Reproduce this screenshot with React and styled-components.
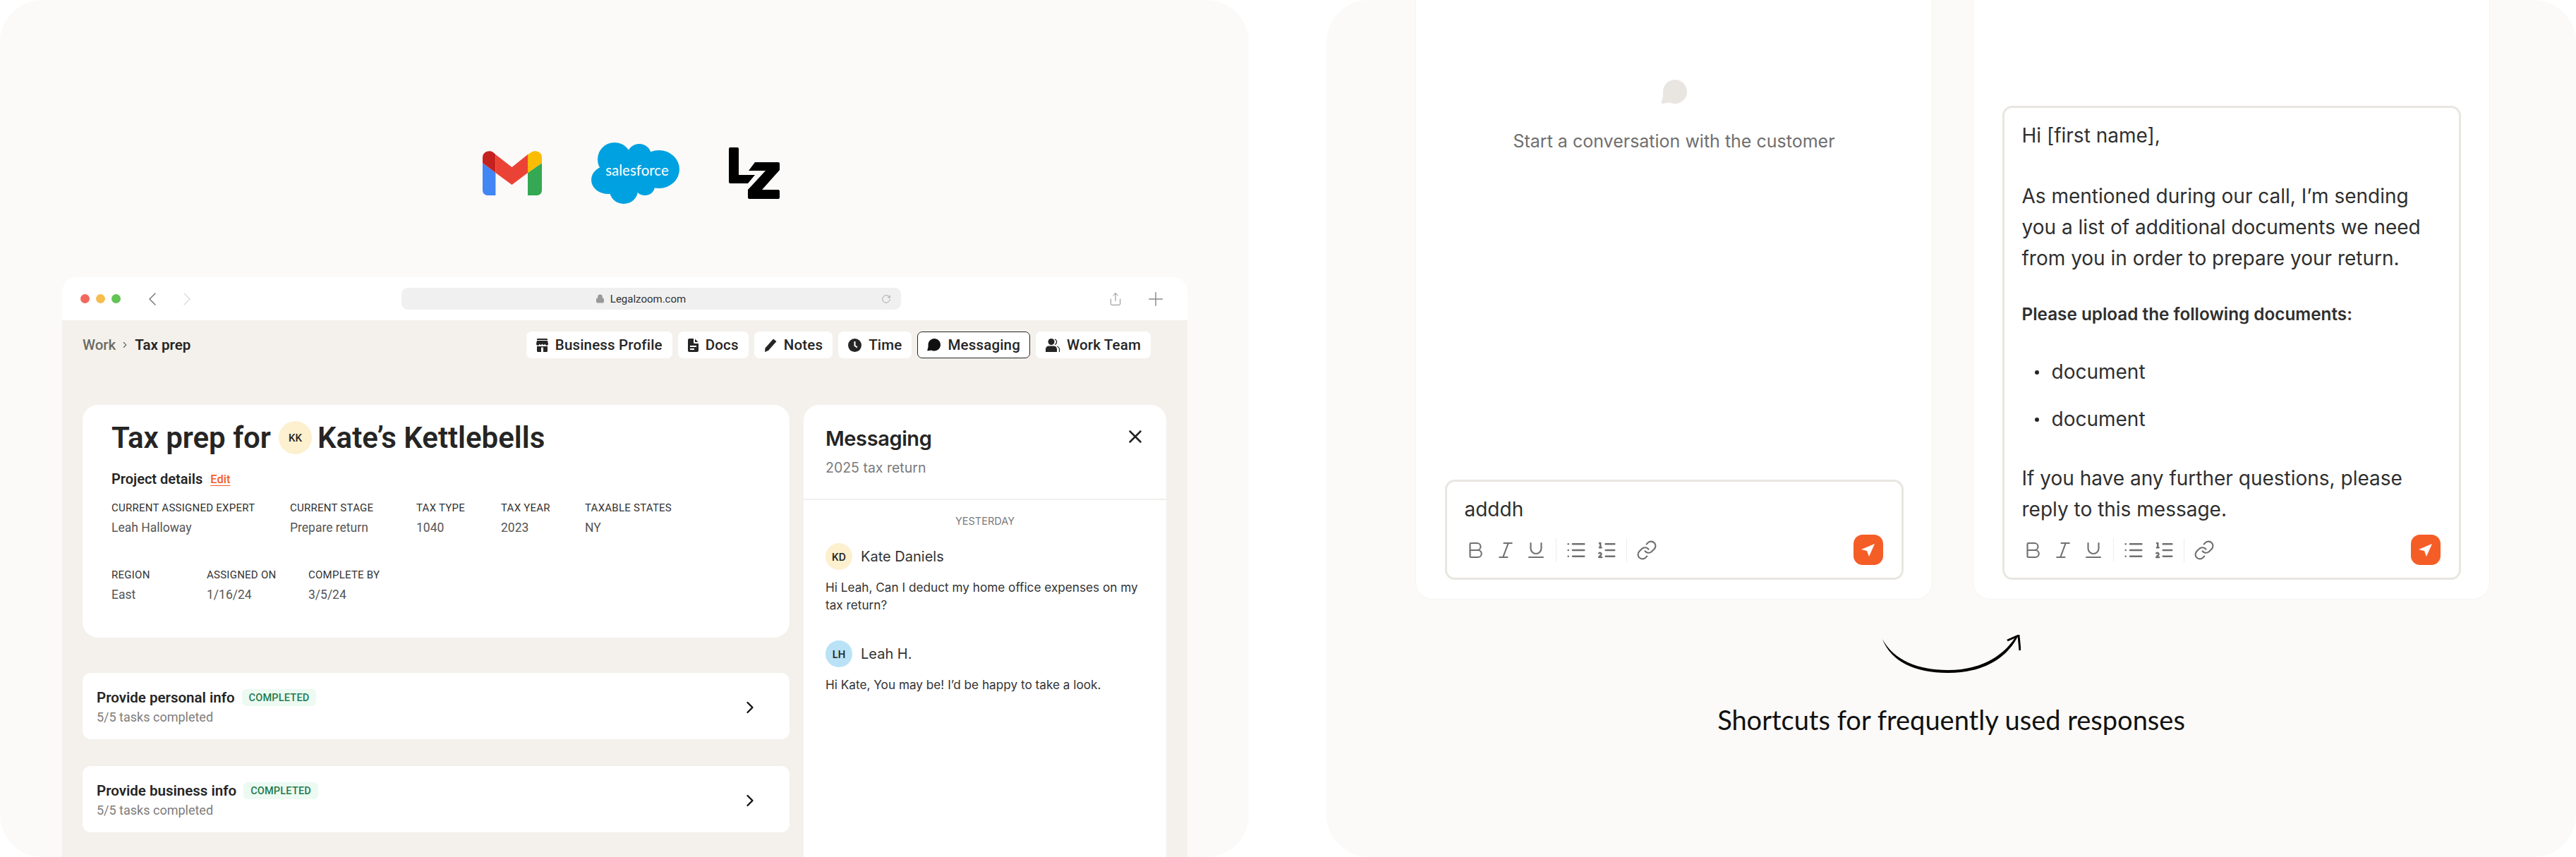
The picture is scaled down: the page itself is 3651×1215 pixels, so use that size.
import React from 'react'
import styled, { createGlobalStyle } from 'styled-components'
import { Bold, Italic, Underline, List, ListOrdered, Link, ChevronLeft, ChevronRight, X, RotateCw, Lock, Plus, Share } from 'lucide-react'

const plex = `Roboto, "Liberation Sans", sans-serif`
const work = `Inter, "Liberation Sans", sans-serif`

const Global = createGlobalStyle`
  html, body { margin: 0; padding: 0; background: #fff; }
  #root { width: 3651px; height: 1215px; overflow: hidden; }
  * { box-sizing: border-box; }
`

const Page = styled.div`
  display: flex;
  gap: 110px;
  width: 3651px;
  height: 1215px;
`

const Panel = styled.section`
  width: 1770px;
  height: 1215px;
  flex: none;
  background: #fbfaf8;
  border-radius: 60px;
  overflow: hidden;
  display: flex;
  flex-direction: column;
`

const LeftPanel = styled(Panel)`
  padding: 202px 87px 0 88px;
`

const RightPanel = styled(Panel)`
  width: 1771px;
  align-items: center;
`

const Logos = styled.div`
  display: flex;
  align-items: center;
  height: 87px;
  padding-left: 596px;
  gap: 70px;
  margin-bottom: 104px;
`

const Browser = styled.div`
  flex: 1;
  display: flex;
  flex-direction: column;
  border-radius: 20px 20px 0 0;
  overflow: hidden;
  background: #f4f1ec;
`

const BrowserBar = styled.div`
  height: 61px;
  flex: none;
  background: #fff;
  display: flex;
  align-items: center;
  padding-left: 26px;
`

const Dot = styled.span`
  width: 13px;
  height: 13px;
  border-radius: 50%;
  background: ${p => p.$color};
  margin-right: 9px;
`

const Nav = styled.div`
  display: flex;
  gap: 17px;
  margin-left: 20px;
  margin-right: 288px;
  color: ${p => p.$color};
  svg { display: block; }
`

const UrlBar = styled.div`
  width: 708px;
  height: 31px;
  border-radius: 9px;
  background: #f0f0f0;
  display: grid;
  grid-template-columns: 1fr auto 1fr;
  align-items: center;
  padding: 0 14px;
  font: 400 15px ${plex};
  color: #333;
`

const UrlText = styled.div`
  grid-column: 2;
  display: flex;
  align-items: center;
  gap: 8px;
  margin-right: 30px;
`

const Reload = styled.div`
  justify-self: end;
  display: flex;
  color: #999;
`

const BarAction = styled.div`
  display: flex;
  color: #8a8a8a;
  margin-left: ${p => p.$ml}px;
`

const Content = styled.div`
  flex: 1;
  min-height: 0;
  padding: 16px 30px 0 29px;
  display: flex;
  flex-direction: column;
`

const TopRow = styled.div`
  display: flex;
  align-items: center;
  justify-content: space-between;
  padding-right: 22px;
  margin-bottom: 66px;
`

const Crumbs = styled.div`
  display: flex;
  align-items: center;
  gap: 6px;
  font: 500 20.5px ${plex};
  color: #6b6b66;
  b { font-weight: 600; color: #252525; margin-left: 1px; }
`

const Tabs = styled.div`
  display: flex;
  gap: 8px;
`

const Tab = styled.div`
  height: 38px;
  padding: 0 13px;
  display: flex;
  align-items: center;
  gap: 10px;
  background: #fff;
  border-radius: 7px;
  border: 1px solid ${p => (p.$active ? '#252525' : '#fff')};
  font: 500 20.5px ${plex};
  letter-spacing: 0.18px;
  color: #252525;
  svg { flex: none; display: block; }
`

const Columns = styled.div`
  flex: 1;
  min-height: 0;
  display: flex;
  gap: 20px;
`

const Main = styled.div`
  width: 1002px;
  flex: none;
`

const DetailCard = styled.div`
  height: 330px;
  background: #fff;
  border-radius: 22px;
  padding: 23px 41px 0;
  margin-bottom: 50px;
`

const Title = styled.h1`
  margin: 0 0 23px;
  display: flex;
  align-items: center;
  height: 47px;
  font: 600 42px ${plex};
  color: #252525;
`

const Avatar = styled.span`
  flex: none;
  width: ${p => p.$size}px;
  height: ${p => p.$size}px;
  border-radius: 50%;
  background: ${p => p.$bg};
  display: flex;
  align-items: center;
  justify-content: center;
  font-family: ${p => (p.$work ? work : plex)};
  font-weight: ${p => (p.$work ? 600 : 500)};
  font-size: ${p => p.$fs}px;
  color: #252525;
`

const TitleAvatar = styled(Avatar)`
  margin: 0 8px 0 11px;
`

const DetailsHead = styled.div`
  display: flex;
  align-items: center;
  gap: 11px;
  height: 24px;
  font: 600 20px ${plex};
  color: #252525;
  margin-bottom: 17px;
`

const Edit = styled.span`
  font: 500 16.5px ${plex};
  color: #f55d27;
  text-decoration: underline;
  text-underline-offset: 3px;
`

const Facts = styled.div`
  display: flex;
  margin-bottom: ${p => p.$mb || 0}px;
`

const Fact = styled.div`
  width: ${p => p.$w}px;
  flex: none;
`

const FactLabel = styled.div`
  font: 400 15px/24px ${plex};
  letter-spacing: 0.25px;
  color: #333;
  white-space: nowrap;
  margin-bottom: 4px;
`

const FactValue = styled.div`
  font: 400 17.5px/24px ${plex};
  color: #555;
  white-space: nowrap;
`

const Task = styled.div`
  height: 94px;
  background: #fff;
  border-radius: 12px;
  padding: 4px 42px 0 20px;
  display: flex;
  align-items: center;
  justify-content: space-between;
  margin-bottom: 38px;
`

const TaskHead = styled.div`
  display: flex;
  align-items: center;
  gap: 10px;
  font: 600 20.5px ${plex};
  color: #252525;
  margin-bottom: 4px;
`

const Badge = styled.span`
  height: 24px;
  padding: 0 10px;
  border-radius: 6px;
  background: #ecfaf2;
  color: #1f7a4d;
  display: flex;
  align-items: center;
  font: 500 14.5px ${plex};
  letter-spacing: 0.2px;
`

const TaskSub = styled.div`
  font: 400 18px/24px ${plex};
  color: #7d7d7d;
`

const Messages = styled.aside`
  width: 514px;
  flex: none;
  height: 700px;
  background: #fff;
  border-radius: 22px 22px 0 0;
`

const MsgHead = styled.div`
  height: 135px;
  border-bottom: 2px solid #f1f0ee;
  padding: 29px 29px 0 31px;
  display: flex;
  justify-content: space-between;
  align-items: flex-start;
  svg { margin-top: 1px; }
`

const MsgTitle = styled.div`
  font: 600 29px/38px ${work};
  letter-spacing: -0.4px;
  color: #252525;
`

const MsgSub = styled.div`
  font: 400 19.5px/26px ${work};
  color: #7a7a7a;
  margin-top: 9px;
`

const Day = styled.div`
  text-align: center;
  font: 400 14.5px/20px ${work};
  color: #7a7a7a;
  margin: 20px 0 21px;
`

const Message = styled.div`
  padding: 0 31px;
  margin-bottom: 38px;
`

const Sender = styled.div`
  display: flex;
  align-items: center;
  gap: 12px;
  font: 400 20px ${work};
  color: #333;
  margin-bottom: 12px;
`

const MsgText = styled.div`
  font: 400 17.2px/25px ${work};
  color: #333;
`

const Cards = styled.div`
  display: flex;
  gap: 57px;
  margin: 0 0 50px 4px;
`

const ChatCard = styled.div`
  width: 733px;
  height: 850px;
  background: #fff;
  border: 1px solid #f6f4f1;
  border-top: 0;
  border-radius: 0 0 24px 24px;
  padding: ${p => p.$top}px 40px 27px;
  display: flex;
  flex-direction: column;
  align-items: center;
`

const EmptyText = styled.div`
  margin-top: 34px;
  font: 400 25px/38px ${work};
  color: #6f6f6f;
`

const Composer = styled.div`
  width: 650px;
  margin-top: auto;
  height: ${p => p.$h}px;
  border: 3px solid #e9e6e1;
  border-radius: 14px;
  padding: ${p => p.$pt}px 26px 18px 25px;
  display: flex;
  flex-direction: column;
`

const Body = styled.div`
  font: 400 28px/44px ${work};
  color: #2f2f2f;
`

const Para = styled.p`
  margin: ${p => p.$mt || 0}px 0 0;
  font-weight: ${p => (p.$strong ? 600 : 400)};
  font-size: ${p => (p.$strong ? 24.3 : 28)}px;
`

const Bullet = styled(Para)`
  padding-left: 42px;
  position: relative;
  &::before {
    content: '';
    position: absolute;
    left: 18px;
    top: 20px;
    width: 6px;
    height: 6px;
    border-radius: 50%;
    background: #252525;
  }
`

const Toolbar = styled.div`
  margin-top: auto;
  display: flex;
  align-items: center;
  color: #707070;
  gap: 13px;
  svg { display: block; }
`

const Sep = styled.span`
  width: 1px;
  height: 34px;
  background: #eeecea;
`

const Send = styled.div`
  margin-left: auto;
  width: 42px;
  height: 43px;
  border-radius: 13px;
  background: #f55d27;
  display: flex;
  align-items: center;
  justify-content: center;
`

const Caption = styled.div`
  margin-top: 41px;
  font: 400 38px/50px Lato, "Liberation Sans", sans-serif;
  color: #111;
`

const Gmail = () => (
  <svg width="84" height="63" viewBox="0 0 84 63">
    <path d="M0 17 18.4 31V63H7a7 7 0 0 1-7-7Z" fill="#4285f4" />
    <path d="M84 17 64 31V63h13a7 7 0 0 0 7-7Z" fill="#34a853" />
    <path d="M18.4 5 41.5 23 64 5V31L41.5 48 18.4 31Z" fill="#ea4335" />
    <path d="M0 17V9C0 1 10-2 15 2L18.4 5V31Z" fill="#c5221f" />
    <path d="M84 17V9C84 1 74-2 69 2L64 5V31Z" fill="#fbbc04" />
  </svg>
)

const Salesforce = () => (
  <svg width="125" height="87" viewBox="0 0 125 87">
    <g fill="#00a1e0">
      <ellipse cx="33" cy="24" rx="24" ry="24" />
      <ellipse cx="68" cy="18" rx="17" ry="16" />
      <ellipse cx="96" cy="38" rx="29" ry="27" />
      <ellipse cx="24" cy="53" rx="24" ry="20" />
      <ellipse cx="46" cy="68" rx="20" ry="19" />
      <ellipse cx="76" cy="62" rx="14" ry="13" />
      <ellipse cx="60" cy="42" rx="46" ry="28" />
    </g>
    <text x="65" y="47" textAnchor="middle" fill="#fff" fontFamily="Lato, sans-serif" fontSize="20.5">salesforce</text>
  </svg>
)

const LzMark = () => (
  <svg width="72" height="73" viewBox="0 0 72 73">
    <path d="M0 2a2 2 0 0 1 2-2H12a2 2 0 0 1 2 2V39H37L27 51H2a2 2 0 0 1-2-2Z" fill="#000" />
    <path d="M37 21H70a2 2 0 0 1 2 2V32L47 60H70a2 2 0 0 1 2 2V71a2 2 0 0 1-2 2H29a2 2 0 0 1-2-2V60L52 33H28Z" fill="#000" />
  </svg>
)

const StoreIcon = () => (
  <svg width="17" height="19" viewBox="0 0 17 19" fill="#252525">
    <path d="M2 0H15a1 1 0 0 1 1 1V2H1V1a1 1 0 0 1 1-1Z" />
    <path d="M1 3H16L17 7.5A2.2 2.2 0 0 1 12.6 7.5 2.2 2.2 0 0 1 8.5 7.5 2.2 2.2 0 0 1 4.4 7.5 2.2 2.2 0 0 1 0 7.5Z" />
    <path d="M1 11H16V17.5A1.5 1.5 0 0 1 14.5 19H2.5A1.5 1.5 0 0 1 1 17.5ZM7 12.5V19H10V12.5Z" fillRule="evenodd" />
  </svg>
)

const DocIcon = () => (
  <svg width="15" height="19" viewBox="0 0 15 19" fill="#252525">
    <path d="M2 0H8V5.5A1.5 1.5 0 0 0 9.5 7H15V17A2 2 0 0 1 13 19H2A2 2 0 0 1 0 17V2A2 2 0 0 1 2 0ZM3 10V12H12V10ZM3 14V16H9V14Z" fillRule="evenodd" />
    <path d="M10 0.5 14.5 5H10Z" />
  </svg>
)

const PencilIcon = () => (
  <svg width="18" height="19" viewBox="0 0 18 19" fill="#252525">
    <path d="M13 0.5 17.5 4 6 17 1 19 1.5 13.5Z" />
  </svg>
)

const ClockIcon = () => (
  <svg width="19" height="19" viewBox="0 0 19 19">
    <circle cx="9.5" cy="9.5" r="9.5" fill="#252525" />
    <path d="M9.5 4V10L13 12.5" stroke="#fff" strokeWidth="2" fill="none" />
  </svg>
)

const BubbleIcon = ({ size = 19, color = '#111' }) => (
  <svg width={size} height={size * 34 / 37} viewBox="0 0 37 34" fill={color}>
    <path d="M20 0C29 0 37 7 37 17 37 27 29 34 20 34 16 34 14 32.5 11 32.5 7 32.5 3 34.5 1 33.5-.5 32.5 3 27 3 22 3 20 3 19 3 17 3 7 11 0 20 0Z" />
  </svg>
)

const TeamIcon = () => (
  <svg width="20" height="19" viewBox="0 0 20 19" fill="#252525">
    <circle cx="8" cy="4.5" r="4.5" />
    <path d="M0 19V15A4.5 4.5 0 0 1 4.5 10.5H11.5A4.5 4.5 0 0 1 16 15V19Z" />
    <path d="M13 1A4 4 0 0 1 13 8.5M16 11A5 5 0 0 1 19.5 16V19" fill="none" stroke="#252525" strokeWidth="1.2" />
  </svg>
)

const PlaneIcon = () => (
  <svg width="19" height="18" viewBox="0 0 19 18" fill="#fff">
    <path d="M19 0 0 8 8 10 11 18Z" />
  </svg>
)

const Arrow = () => (
  <svg width="196" height="54" viewBox="0 0 196 54">
    <path d="M0 6C16 36 50 50 93 50 140 50 172 30 190 1L192 2C176 34 142 54 93 54 46 54 12 38 0 6Z" fill="#000" />
    <path d="M177 8 193 1 195 22" fill="none" stroke="#000" strokeWidth="3" />
  </svg>
)

const FormatBar = () => (
  <Toolbar>
    <Bold size={30} strokeWidth={1.7} />
    <Italic size={30} strokeWidth={1.7} />
    <Underline size={30} strokeWidth={1.7} />
    <Sep />
    <List size={30} strokeWidth={2} />
    <ListOrdered size={30} strokeWidth={2} />
    <Sep />
    <Link size={30} strokeWidth={1.7} />
    <Send><PlaneIcon /></Send>
  </Toolbar>
)

const tabs = [
  { label: 'Business Profile', icon: <StoreIcon /> },
  { label: 'Docs', icon: <DocIcon /> },
  { label: 'Notes', icon: <PencilIcon /> },
  { label: 'Time', icon: <ClockIcon /> },
  { label: 'Messaging', icon: <BubbleIcon />, active: true },
  { label: 'Work Team', icon: <TeamIcon /> },
]

const firstFacts = [
  { w: 253, label: 'CURRENT ASSIGNED EXPERT', value: 'Leah Halloway' },
  { w: 179, label: 'CURRENT STAGE', value: 'Prepare return' },
  { w: 120, label: 'TAX TYPE', value: '1040' },
  { w: 119, label: 'TAX YEAR', value: '2023' },
  { w: 130, label: 'TAXABLE STATES', value: 'NY' },
]

const secondFacts = [
  { w: 135, label: 'REGION', value: 'East' },
  { w: 144, label: 'ASSIGNED ON', value: '1/16/24' },
  { w: 130, label: 'COMPLETE BY', value: '3/5/24' },
]

const FactRow = ({ items, mb }) => (
  <Facts $mb={mb}>
    {items.map(f => (
      <Fact key={f.label} $w={f.w}>
        <FactLabel>{f.label}</FactLabel>
        <FactValue>{f.value}</FactValue>
      </Fact>
    ))}
  </Facts>
)

const TaskRow = ({ title }) => (
  <Task>
    <div>
      <TaskHead>{title}<Badge>COMPLETED</Badge></TaskHead>
      <TaskSub>5/5 tasks completed</TaskSub>
    </div>
    <ChevronRight size={28} strokeWidth={2} color="#111" />
  </Task>
)

export default function App() {
  return (
    <Page>
      <Global />
      <LeftPanel>
        <Logos>
          <Gmail />
          <Salesforce />
          <LzMark />
        </Logos>
        <Browser>
          <BrowserBar>
            <Dot $color="#f2695c" />
            <Dot $color="#f6bd4f" />
            <Dot $color="#61c454" />
            <Nav $color="#777">
              <ChevronLeft size={32} strokeWidth={1.1} />
              <ChevronRight size={32} strokeWidth={1.1} color="#ddd" />
            </Nav>
            <UrlBar>
              <UrlText><Lock size={13} fill="#999" color="#999" />Legalzoom.com</UrlText>
              <Reload><RotateCw size={14} strokeWidth={1.4} /></Reload>
            </UrlBar>
            <BarAction $ml={294}><Share size={20} strokeWidth={1.2} /></BarAction>
            <BarAction $ml={31}><Plus size={32} strokeWidth={1.1} /></BarAction>
          </BrowserBar>
          <Content>
            <TopRow>
              <Crumbs>
                Work
                <ChevronRight size={14} strokeWidth={2} />
                <b>Tax prep</b>
              </Crumbs>
              <Tabs>
                {tabs.map(t => (
                  <Tab key={t.label} $active={t.active}>{t.icon}{t.label}</Tab>
                ))}
              </Tabs>
            </TopRow>
            <Columns>
              <Main>
                <DetailCard>
                  <Title>
                    Tax prep for
                    <TitleAvatar $size={47} $bg="#fdf0cf" $fs={15}>KK</TitleAvatar>
                    Kate’s Kettlebells
                  </Title>
                  <DetailsHead>Project details <Edit>Edit</Edit></DetailsHead>
                  <FactRow items={firstFacts} mb={43} />
                  <FactRow items={secondFacts} />
                </DetailCard>
                <TaskRow title="Provide personal info" />
                <TaskRow title="Provide business info" />
              </Main>
              <Messages>
                <MsgHead>
                  <div>
                    <MsgTitle>Messaging</MsgTitle>
                    <MsgSub>2025 tax return</MsgSub>
                  </div>
                  <X size={30} strokeWidth={2} color="#222" />
                </MsgHead>
                <Day>YESTERDAY</Day>
                <Message>
                  <Sender><Avatar $size={38} $bg="#fdf0cf" $fs={14} $work>KD</Avatar>Kate Daniels</Sender>
                  <MsgText>Hi Leah, Can I deduct my home office expenses on my tax return?</MsgText>
                </Message>
                <Message>
                  <Sender><Avatar $size={38} $bg="#b9e2f6" $fs={14} $work>LH</Avatar>Leah H.</Sender>
                  <MsgText>Hi Kate, You may be! I’d be happy to take a look.</MsgText>
                </Message>
              </Messages>
            </Columns>
          </Content>
        </Browser>
      </LeftPanel>
      <RightPanel>
        <Cards>
          <ChatCard $top={113}>
            <BubbleIcon size={37} color="#e9e6e1" />
            <EmptyText>Start a conversation with the customer</EmptyText>
            <Composer $h={142} $pt={17}>
              <Body>adddh</Body>
              <FormatBar />
            </Composer>
          </ChatCard>
          <ChatCard $top={0}>
            <Composer $h={672} $pt={17}>
              <Body>
                <Para>Hi [first name],</Para>
                <Para $mt={42}>As mentioned during our call, I’m sending you a list of additional documents we need from you in order to prepare your return.</Para>
                <Para $mt={35} $strong>Please upload the following documents:</Para>
                <Bullet $mt={38}>document</Bullet>
                <Bullet $mt={23}>document</Bullet>
                <Para $mt={40}>If you have any further questions, please reply to this message.</Para>
              </Body>
              <FormatBar />
            </Composer>
          </ChatCard>
        </Cards>
        <Arrow />
        <Caption>Shortcuts for frequently used responses</Caption>
      </RightPanel>
    </Page>
  )
}
